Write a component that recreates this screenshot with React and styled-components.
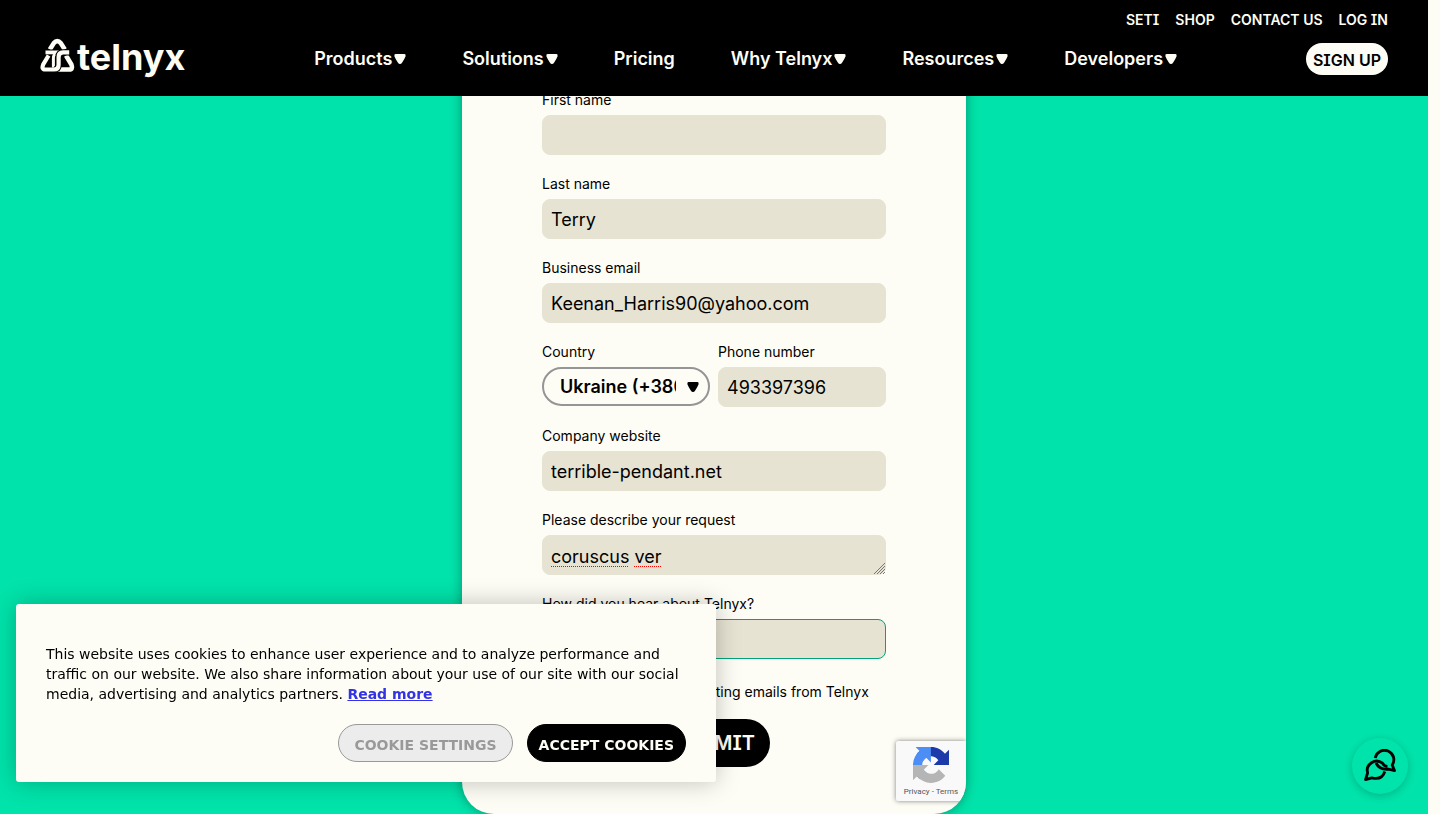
import React from "react";
import styled, { createGlobalStyle } from "styled-components";

const ink = "#000000";
const cream = "#fefdf5";
const green = "#00e3aa";
const sand = "#e6e3d3";

const GlobalStyle = createGlobalStyle`
  *, *::before, *::after { box-sizing: border-box; }
  body {
    margin: 0;
    background: ${cream};
    color: ${ink};
    font-family: Inter, "Liberation Sans", sans-serif;
  }
`;

const Page = styled.div`
  padding-right: 12px;
`;

const Header = styled.header`
  position: fixed;
  inset: 0 12px auto 0;
  z-index: 2;
  height: 96px;
  padding: 8px 40px 0;
  background: ${ink};
  color: ${cream};
  font-feature-settings: "cv08";
`;

const UtilityNav = styled.nav`
  display: flex;
  justify-content: flex-end;
  gap: 16px;
`;

const UtilityLink = styled.a`
  color: inherit;
  font-size: 14px;
  font-weight: 600;
  line-height: 24px;
  text-decoration: none;
`;

const MainRow = styled.div`
  display: flex;
  align-items: center;
  justify-content: space-between;
  height: 54px;
`;

const Logo = styled.a`
  display: flex;
  align-items: center;
  gap: 2px;
  padding-bottom: 4px;
  color: inherit;
  font-size: 36px;
  font-weight: 700;
  line-height: 40px;
  text-decoration: none;
`;

const NavList = styled.ul`
  display: flex;
  gap: 56px;
  margin: 0;
  padding: 0;
  list-style: none;
`;

const NavLink = styled.a`
  display: flex;
  align-items: center;
  gap: 2px;
  color: inherit;
  font-size: 18px;
  font-weight: 600;
  line-height: 24px;
  text-decoration: none;
`;

const SignUp = styled.a`
  padding: 2px 7px 0;
  border-radius: 16px;
  background: ${cream};
  color: ${ink};
  font-size: 16px;
  font-weight: 600;
  line-height: 30px;
  text-decoration: none;
`;

const Main = styled.main`
  display: flex;
  justify-content: center;
  min-height: 100vh;
  background: ${green};
`;

const Card = styled.div`
  position: relative;
  width: 504px;
  padding: 89px 80px 47px;
  overflow: hidden;
  border-radius: 0 0 32px 32px;
  background: ${cream};
  box-shadow: 0 0 12px rgba(0, 0, 0, 0.35);
`;

const Form = styled.form`
  display: flex;
  flex-direction: column;
  gap: 18px;
`;

const FieldRow = styled.div`
  display: grid;
  grid-template-columns: 1fr 1fr;
  gap: 8px;
`;

const Field = styled.div`
  display: flex;
  flex-direction: column;
  gap: 4px;
  min-width: 0;
`;

const Label = styled.label`
  font-size: 14px;
  line-height: 22px;
`;

const Input = styled.input`
  width: 100%;
  height: 40px;
  padding: 0 8px;
  border: 1px solid ${(p) => (p.$active ? "#00a37a" : sand)};
  border-radius: 8px;
  outline: none;
  background: ${sand};
  color: ${ink};
  font: 400 18px/24px Inter, sans-serif;
`;

const Stack = styled.div`
  position: relative;
  display: grid;
`;

const TextArea = styled.textarea`
  width: 100%;
  height: 40px;
  padding: 9px 8px 0;
  border: 1px solid ${sand};
  border-radius: 8px;
  outline: none;
  overflow: hidden;
  background: ${sand};
  color: ${ink};
  font: 400 18px/24px Inter, sans-serif;
  resize: none;
`;

const SpellMarks = styled.div`
  position: absolute;
  left: 9px;
  bottom: 8px;
  display: flex;
  gap: 6px;
  pointer-events: none;
`;

const SpellMark = styled.span`
  width: ${(p) => p.$width}px;
  border-bottom: 1px dotted #ff0000;
`;

const Grip = styled.svg`
  position: absolute;
  right: 1px;
  bottom: 1px;
  pointer-events: none;
`;

const Select = styled.select`
  grid-area: 1 / 1;
  width: 100%;
  height: 39px;
  padding: 0 32px 0 16px;
  border: 2px solid #959595;
  border-radius: 20px;
  outline: none;
  appearance: none;
  background: ${cream};
  color: ${ink};
  font: 600 18px/24px Inter, sans-serif;
  text-overflow: clip;
`;

const SelectArrow = styled.span`
  grid-area: 1 / 1;
  place-self: center end;
  display: flex;
  padding-right: 11px;
  pointer-events: none;
`;

const Consent = styled.label`
  display: flex;
  align-items: center;
  gap: 4px;
  padding-top: 4px;
  font-size: 14px;
  line-height: 22px;
`;

const Checkbox = styled.input`
  width: 16px;
  height: 16px;
  margin: 0;
`;

const Submit = styled.button`
  align-self: center;
  width: 112px;
  height: 48px;
  margin-top: -2px;
  padding: 0;
  border: 0;
  border-radius: 24px;
  background: ${ink};
  color: ${cream};
  font: 600 20px/24px Inter, sans-serif;
  font-feature-settings: "cv08";
`;

const CaptchaBadge = styled.div`
  position: absolute;
  right: 0;
  bottom: 13px;
  display: flex;
  flex-direction: column;
  align-items: center;
  width: 70px;
  height: 60px;
  padding-top: 6px;
  border-radius: 2px 0 0 2px;
  background: #f9f9f9;
  box-shadow: 0 0 5px #808080;
`;

const CaptchaLinks = styled.div`
  color: #555555;
  font: 400 8px/18px Roboto, sans-serif;

  a {
    color: inherit;
    text-decoration: none;
  }
`;

const CookieBanner = styled.section`
  position: fixed;
  left: 16px;
  bottom: 32px;
  z-index: 3;
  width: 700px;
  max-width: calc(100vw - 32px);
  padding: 40px 30px 20px;
  border-radius: 3px;
  background: ${cream};
  box-shadow: 0 0 24px rgba(0, 0, 0, 0.25);
  font: 400 14px/20px "DejaVu Sans", sans-serif;

  p {
    margin: 0 0 20px;
  }
`;

const ReadMore = styled.a`
  color: #3333e5;
  font-weight: 700;
`;

const CookieActions = styled.div`
  display: flex;
  justify-content: flex-end;
  gap: 14px;
`;

const CookieButton = styled.button`
  height: 38px;
  padding: 4px ${(p) => (p.$primary ? 11 : 15)}px 0;
  border: 1px solid ${(p) => (p.$primary ? ink : "#999999")};
  border-radius: 19px;
  background: ${(p) => (p.$primary ? ink : "#ececec")};
  color: ${(p) => (p.$primary ? cream : "#999999")};
  font: 700 14px/20px "DejaVu Sans", sans-serif;
`;

const ChatButton = styled.button`
  position: fixed;
  right: 32px;
  bottom: 20px;
  z-index: 3;
  display: grid;
  place-items: center;
  width: 56px;
  height: 56px;
  padding: 0;
  border: 0;
  border-radius: 50%;
  background: ${green};
  color: ${ink};
  box-shadow: 0 2px 8px rgba(0, 0, 0, 0.2);
`;

function Caret() {
  return (
    <svg width="12" height="10" viewBox="0 0 12 10" fill="currentColor" aria-hidden="true">
      <path d="M1.6 0h8.800Q12 .1 11.600 2.200 11 4 8.200 8.400 7.200 10 6 10T3.800 8.400Q1 4 .4 2.200 0 .1 1.600 0z" />
    </svg>
  );
}

function LogoMark() {
  return (
    <svg width="35" height="38" viewBox="0 0 35 38" fill="none" aria-hidden="true">
      <path d="M9.800 11.500 13.700 5.300Q17.300 .9 20.900 5.300L24.800 11.500" stroke={cream} strokeWidth="4.600" />
      <path d="M26 17.500 31.400 26.500Q33.200 31.500 29.200 31.500H14" stroke={cream} strokeWidth="4.600" />
      <path d="M5.500 14.400H18Q13.600 15 13.600 20V30" stroke={ink} strokeWidth="6" />
      <path d="M5.500 14.400H19" stroke={cream} strokeWidth="3.800" />
      <path d="M13.400 29.500V20Q13.400 17 15.500 16" stroke={cream} strokeWidth="3" />
      <path d="M29.200 14.400H23Q18.600 14.400 18.600 19V27Q18.600 31.500 14 31.500" stroke={ink} strokeWidth="6.200" />
      <path
        d="M29.200 14.400H23Q18.600 14.400 18.600 19V27Q18.600 31.500 14 31.500H5.200Q1.200 31.500 3.200 26.500L8.600 17.500"
        stroke={cream}
        strokeWidth="4.200"
      />
    </svg>
  );
}

function CaptchaLogo() {
  return (
    <svg width="38" height="38" viewBox="0 0 64 64" aria-hidden="true">
      <path
        fill="#1c3aa9"
        d="M64 31.955l-.033-1.370V4.687l-7.160 7.160C50.948 4.674 42.033.093 32.050.093c-10.400 0-19.622 4.960-25.458 12.640l11.736 11.860a15.550 15.550 0 0 1 4.754-5.334c2.050-1.600 4.952-2.906 8.968-2.906.485 0 .860.057 1.135.163 4.976.393 9.288 3.140 11.828 7.124l-8.307 8.307L64 31.953"
      />
      <path
        fill="#4c8df6"
        d="M31.862.094l-1.370.033H4.594l7.160 7.160C4.580 13.147 0 22.060 0 32.046c0 10.400 4.960 19.622 12.640 25.458L24.500 45.768a15.550 15.550 0 0 1-5.334-4.754c-1.600-2.050-2.906-4.952-2.906-8.968 0-.485.057-.860.163-1.135.393-4.976 3.140-9.288 7.124-11.828l8.307 8.307L31.860.095"
      />
      <path
        fill="#b5b5b5"
        d="M.001 32.045l.033 1.370v25.898l7.160-7.160c5.860 7.173 14.774 11.754 24.760 11.754 10.400 0 19.622-4.960 25.458-12.640l-11.736-11.860a15.550 15.550 0 0 1-4.754 5.334c-2.050 1.600-4.952 2.906-8.968 2.906-.485 0-.860-.057-1.135-.163-4.976-.393-9.288-3.140-11.828-7.124l8.307-8.307L0 32.044"
      />
    </svg>
  );
}

function ChatIcon() {
  return (
    <svg
      width="34"
      height="34"
      viewBox="0 0 34 34"
      fill="none"
      stroke="currentColor"
      strokeWidth="2.800"
      strokeLinejoin="round"
      aria-hidden="true"
    >
      <path d="M12.200 9A9.400 9.400 0 1 1 29.200 16L31.500 21.600 25.500 20.200Q16.500 21 13 14" />
      <path d="M24.500 17.500Q21.500 17.500 19.500 14.200A9.400 9.400 0 0 0 4.600 24L2.500 30.700 8.800 28.800Q19 31.500 21.800 22.500" />
    </svg>
  );
}

const utilityLinks = ["SETI", "SHOP", "CONTACT US", "LOG IN"];

const navItems = [
  { label: "Products", menu: true },
  { label: "Solutions", menu: true },
  { label: "Pricing", menu: false },
  { label: "Why Telnyx", menu: true },
  { label: "Resources", menu: true },
  { label: "Developers", menu: true },
];

function TextField({ id, label, value, type = "text", active }) {
  return (
    <Field>
      <Label htmlFor={id}>{label}</Label>
      <Input id={id} name={id} type={type} defaultValue={value} $active={active} />
    </Field>
  );
}

export default function App() {
  return (
    <Page>
      <GlobalStyle />
      <Header>
        <UtilityNav aria-label="Account">
          {utilityLinks.map((label) => (
            <UtilityLink key={label} href="#">
              {label}
            </UtilityLink>
          ))}
        </UtilityNav>
        <MainRow>
          <Logo href="#">
            <LogoMark />
            telnyx
          </Logo>
          <nav aria-label="Main">
            <NavList>
              {navItems.map((item) => (
                <li key={item.label}>
                  <NavLink href="#">
                    {item.label}
                    {item.menu && <Caret />}
                  </NavLink>
                </li>
              ))}
            </NavList>
          </nav>
          <SignUp href="#">SIGN UP</SignUp>
        </MainRow>
      </Header>

      <Main>
        <Card>
          <Form onSubmit={(e) => e.preventDefault()}>
            <TextField id="firstName" label="First name" value="" />
            <TextField id="lastName" label="Last name" value="Terry" />
            <TextField
              id="email"
              label="Business email"
              type="email"
              value="Keenan_Harris90@yahoo.com"
            />
            <FieldRow>
              <Field>
                <Label htmlFor="country">Country</Label>
                <Stack>
                  <Select id="country" name="country" defaultValue="UA">
                    <option value="UA">Ukraine (+380)</option>
                  </Select>
                  <SelectArrow>
                    <Caret />
                  </SelectArrow>
                </Stack>
              </Field>
              <TextField id="phone" label="Phone number" type="tel" value="493397396" />
            </FieldRow>
            <TextField id="website" label="Company website" value="terrible-pendant.net" />
            <Field>
              <Label htmlFor="request">Please describe your request</Label>
              <Stack>
                <TextArea id="request" name="request" spellCheck={false} defaultValue="coruscus ver" />
                <SpellMarks aria-hidden="true">
                  <SpellMark $width={77} />
                  <SpellMark $width={27} />
                </SpellMarks>
                <Grip width="11" height="11" viewBox="0 0 11 11" stroke="#777777" aria-hidden="true">
                  <path d="M0 11 11 0M3 11 11 3M6 11 11 6M9 11 11 9" />
                </Grip>
              </Stack>
            </Field>
            <TextField id="source" label="How did you hear about Telnyx?" value="" active />
            <Consent>
              <Checkbox type="checkbox" name="marketing" />
              Opt in to receive marketing emails from Telnyx
            </Consent>
            <Submit type="submit">SUBMIT</Submit>
          </Form>
          <CaptchaBadge>
            <CaptchaLogo />
            <CaptchaLinks>
              <a href="#">Privacy</a> - <a href="#">Terms</a>
            </CaptchaLinks>
          </CaptchaBadge>
        </Card>
      </Main>

      <CookieBanner aria-label="Cookie notice">
        <p>
          This website uses cookies to enhance user experience and to analyze performance and
          traffic on our website. We also share information about your use of our site with our
          social media, advertising and analytics partners. <ReadMore href="#">Read more</ReadMore>
        </p>
        <CookieActions>
          <CookieButton type="button">COOKIE SETTINGS</CookieButton>
          <CookieButton type="button" $primary>
            ACCEPT COOKIES
          </CookieButton>
        </CookieActions>
      </CookieBanner>

      <ChatButton type="button" aria-label="Open chat">
        <ChatIcon />
      </ChatButton>
    </Page>
  );
}
